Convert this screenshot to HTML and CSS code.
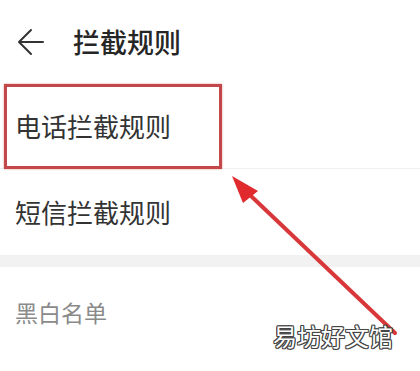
FILE: index.html
```html
<!DOCTYPE html>
<html lang="zh">
<head>
<meta charset="utf-8">
<link rel="stylesheet" href="styles.css">
</head>
<body>
<div class="page">
  <header class="bar">
    <svg class="back" width="28" height="28" viewBox="0 0 28 28"><path d="M26 14H3M14 2L2 14l12 12" fill="none" stroke="#333" stroke-width="2" stroke-linecap="round" stroke-linejoin="round"/></svg>
    <span class="title">拦截规则</span>
  </header>
  <div class="item first"><span>电话拦截规则</span></div>
  <div class="item"><span>短信拦截规则</span></div>
  <div class="band"></div>
  <div class="section">黑白名单</div>
  <div class="item cut"><span>拦截记录</span></div>

  <div class="redbox"></div>
  <svg class="arrow" width="420" height="371" viewBox="0 0 420 371">
    <line x1="251" y1="196" x2="395" y2="333" stroke="#d8383a" stroke-width="4" stroke-linecap="round"/>
    <polygon points="232,176 258,191 243,203" fill="#e02a2e"/>
  </svg>
  <div class="mark">易坊好文馆</div>
</div>
</body>
</html>
```
FILE: styles.css
```css
html, body {
  margin: 0;
  padding: 0;
  background: #fff;
}
.page {
  position: relative;
  width: 420px;
  height: 371px;
  overflow: hidden;
  font-family: "Noto Sans CJK SC", "Noto Sans", sans-serif;
}
.bar {
  height: 83px;
  display: flex;
  align-items: center;
  padding-left: 17px;
  box-sizing: border-box;
}
.back {
  display: block;
  margin-right: 28px;
}
.title {
  font-size: 27px;
  color: #262626;
  line-height: 1;
  font-weight: 500;
}
.item {
  height: 86px;
  display: flex;
  align-items: center;
  padding-left: 15px;
  font-size: 26px;
  color: #333;
  line-height: 1;
}
.item.first {
  border-bottom: 1px solid #f1f1f1;
  box-sizing: border-box;
}
.band {
  height: 12px;
  background: #f2f2f2;
}
.section {
  height: 92px;
  display: flex;
  align-items: center;
  padding-left: 15px;
  padding-bottom: 2px;
  box-sizing: border-box;
  font-size: 23px;
  color: #8a8a8a;
  line-height: 1;
}
.item.cut {
  align-items: flex-start;
  padding-top: 13px;
  box-sizing: border-box;
  color: #666;
}
.redbox {
  position: absolute;
  left: 4px;
  top: 84px;
  width: 218px;
  height: 85px;
  box-sizing: border-box;
  border: 3px solid #c4484a;
  box-shadow: 0 0 2px rgba(190, 60, 60, 0.5);
}
.arrow {
  position: absolute;
  left: 0;
  top: 0;
}
.mark {
  position: absolute;
  left: 273px;
  top: 324px;
  font-size: 24px;
  line-height: 1;
  color: #fff;
  font-family: "Noto Sans CJK SC", sans-serif;
  text-shadow: 1px 0 0 #444, -1px 0 0 #444, 0 1px 0 #444, 0 -1px 0 #444, 1px 1px 0 #444, -1px -1px 0 #444, 1px -1px 0 #444, -1px 1px 0 #444;
}
```
